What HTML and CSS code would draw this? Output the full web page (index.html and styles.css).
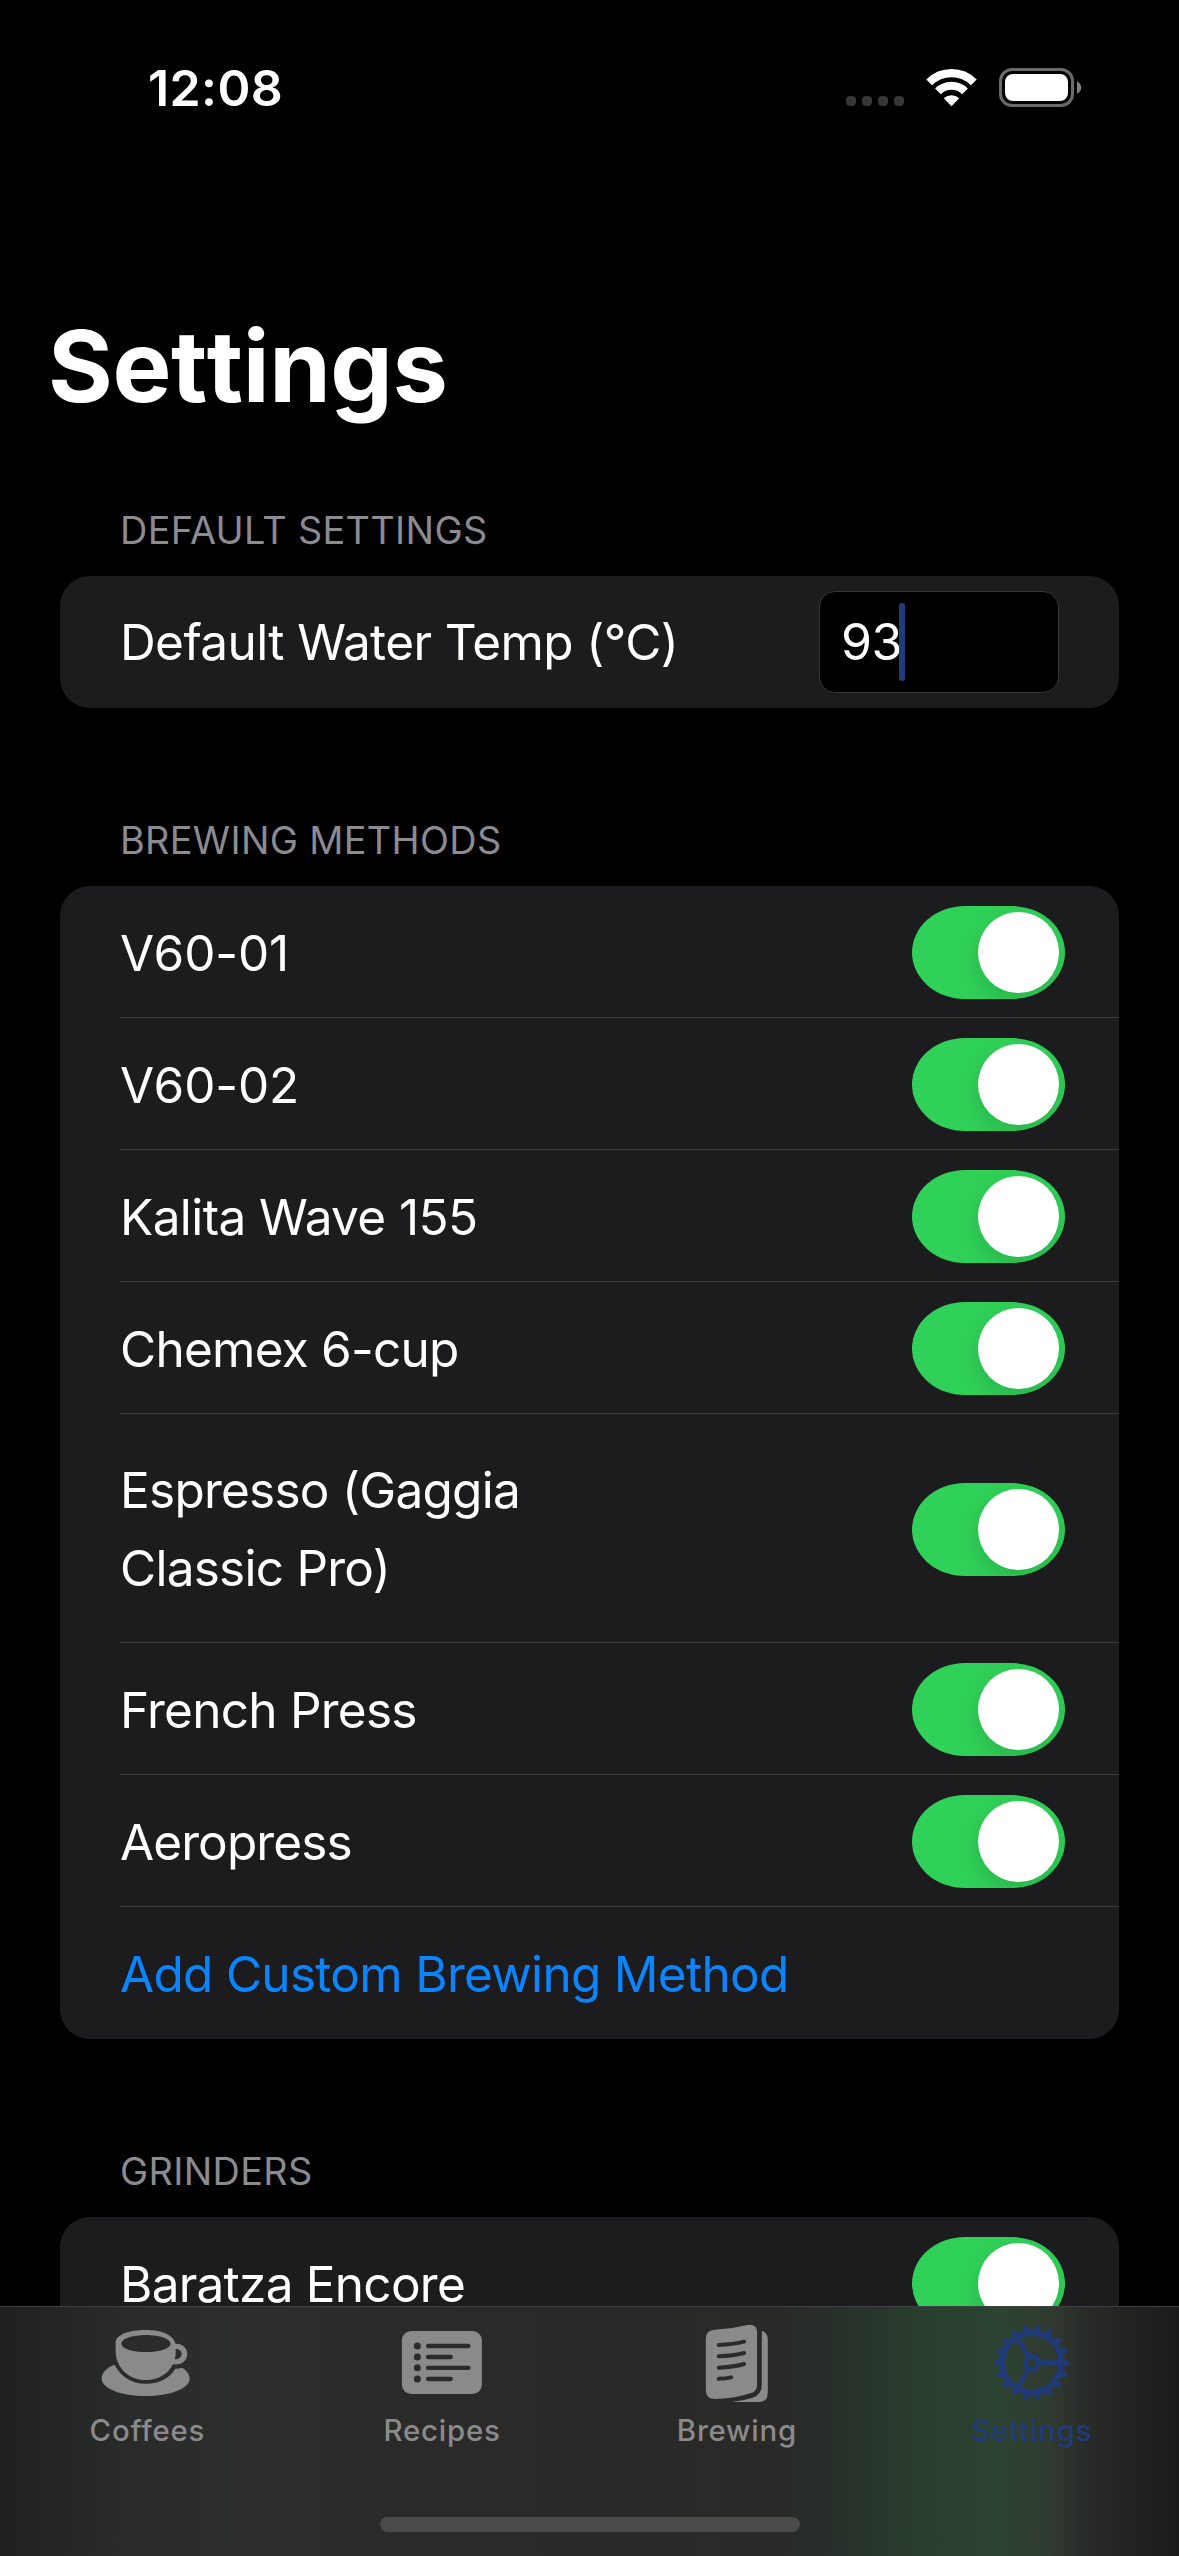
FILE: index.html
```html
<!DOCTYPE html>
<html lang="en">
<head>
<meta charset="utf-8">
<title>Settings</title>
<link rel="stylesheet" href="styles.css">
</head>
<body>
<div class="screen">
  <header class="status">
    <span class="clock">12:08</span>
    <div class="status-icons">
      <div class="signal"><i></i><i></i><i></i><i></i></div>
      <svg class="wifi" viewBox="0 0 51 38">
        <g fill="none" stroke="#fff" stroke-width="8.2">
          <path d="M3.2 13.4A31.6 31.6 0 0 1 47.8 13.4"/>
          <path d="M12 22.3A19.2 19.2 0 0 1 39 22.3"/>
        </g>
        <path fill="#fff" d="M25.5 37.3L17.8 29.3A11.3 11.3 0 0 1 33.2 29.3Z"/>
      </svg>
      <svg class="battery" viewBox="0 0 83 39">
        <rect x="1.5" y="1.5" width="72" height="36" rx="11.5" fill="none" stroke="#6a6a6a" stroke-width="3"/>
        <rect x="6" y="6" width="63" height="27" rx="8" fill="#fff"/>
        <path d="M78 13.2Q82.2 15.5 82.2 19.5T78 25.8Z" fill="#808080"/>
      </svg>
    </div>
  </header>

  <main class="content">
    <h1 class="title">Settings</h1>

    <section class="group">
      <h2 class="group-title">DEFAULT SETTINGS</h2>
      <div class="card">
        <div class="row field-row">
          <span class="label wide">Default Water Temp (°C)</span>
          <div class="field"><span class="value">93</span><b class="caret"></b></div>
        </div>
      </div>
    </section>

    <section class="group">
      <h2 class="group-title">BREWING METHODS</h2>
      <div class="card">
        <div class="row"><span class="label model">V60-01</span><span class="toggle"></span></div>
        <div class="row"><span class="label model">V60-02</span><span class="toggle"></span></div>
        <div class="row"><span class="label wide">Kalita Wave 155</span><span class="toggle"></span></div>
        <div class="row"><span class="label">Chemex 6-cup</span><span class="toggle"></span></div>
        <div class="row tall"><span class="label">Espresso (Gaggia<br>Classic Pro)</span><span class="toggle"></span></div>
        <div class="row"><span class="label">French Press</span><span class="toggle"></span></div>
        <div class="row"><span class="label tight">Aeropress</span><span class="toggle"></span></div>
        <div class="row"><span class="label link">Add Custom Brewing Method</span></div>
      </div>
    </section>

    <section class="group">
      <h2 class="group-title">GRINDERS</h2>
      <div class="card">
        <div class="row"><span class="label">Baratza Encore</span><span class="toggle"></span></div>
      </div>
    </section>
  </main>

  <nav class="tabs">
    <div class="tab">
      <svg class="icon" viewBox="-7.9 0 360 300">
        <path fill="currentColor" d="M75 164C92 198 124 221 169 221C209 221 241 203 257 176Q266 177 278 173C292 182 300 193 300 206C300 235 241 258 168 258C95 258 36 235 36 206C36 188 50 173 75 164Z"/>
        <path fill="currentColor" fill-rule="evenodd" d="M78 98C78 74 118 60 169 60C214 60 250 73 258 101C278 100 293 113 293 132C293 151 277 166 250 163C236 191 209 210 169 210C114 210 78 170 78 122ZM95 101C95 115 128 126 169 126S243 115 243 101S210 75 169 75S95 87 95 101ZM258 117C259 129 258 140 255 148C268 148 276 141 276 132C276 123 269 117 258 117Z"/>
      </svg>
      <span class="tab-label">Coffees</span>
    </div>
    <div class="tab">
      <svg class="icon" viewBox="-23.6 0 360 300">
        <rect x="36" y="63" width="240" height="189" rx="28" fill="currentColor"/>
        <g fill="#2a2b2a">
          <circle cx="82.500" cy="108" r="10.500"/><circle cx="82.500" cy="141" r="10.500"/>
          <circle cx="82.500" cy="173" r="10.500"/><circle cx="82.500" cy="207" r="10.500"/>
          <rect x="108" y="101.500" width="134" height="13" rx="6.500"/>
          <rect x="108" y="134.500" width="81" height="13" rx="6.500"/>
          <rect x="108" y="167" width="134" height="13" rx="6.500"/>
          <rect x="108" y="200.500" width="81" height="13" rx="6.500"/>
        </g>
      </svg>
      <span class="tab-label">Recipes</span>
    </div>
    <div class="tab">
      <svg class="icon" viewBox="-9.4 0 360 300">
        <path fill="currentColor" d="M77 86Q77 60 104 59Q154 57 203 45Q231 41 231 68V224Q231 244 211 250Q158 267 104 267Q77 267 77 240Z"/>
        <path fill="currentColor" d="M245 62Q263 68 263 90V248Q263 276 235 276H155Q189 272 218 263Q245 253 245 226Z"/>
        <g fill="none" stroke="#2a2b2a" stroke-width="12" stroke-linecap="round">
          <path d="M116 105Q160 103 192 95"/>
          <path d="M116 139Q160 137 192 129"/>
          <path d="M116 173Q160 171 192 162"/>
          <path d="M116 206.500Q138 206 153 202"/>
        </g>
      </svg>
      <span class="tab-label">Brewing</span>
    </div>
    <div class="tab active">
      <svg class="icon" viewBox="4.900 0 360 300">
        <g transform="translate(184.500 158)" fill="none" stroke="currentColor">
          <circle r="88.500" stroke-width="17"/>
          <circle r="19.500" stroke-width="15"/>
          <path stroke-width="14" d="M25 0H84M-12.500 -21.700L-42 -72.700M-12.500 21.700L-42 72.700"/>
          <g stroke="none" fill="currentColor">
            <path id="tooth" d="M92 -13Q97 -9 108 -6Q113 -5 113 0T108 6Q97 9 92 13Z"/>
            <use href="#tooth" transform="rotate(20)"/>
            <use href="#tooth" transform="rotate(40)"/>
            <use href="#tooth" transform="rotate(60)"/>
            <use href="#tooth" transform="rotate(80)"/>
            <use href="#tooth" transform="rotate(100)"/>
            <use href="#tooth" transform="rotate(120)"/>
            <use href="#tooth" transform="rotate(140)"/>
            <use href="#tooth" transform="rotate(160)"/>
            <use href="#tooth" transform="rotate(180)"/>
            <use href="#tooth" transform="rotate(200)"/>
            <use href="#tooth" transform="rotate(220)"/>
            <use href="#tooth" transform="rotate(240)"/>
            <use href="#tooth" transform="rotate(260)"/>
            <use href="#tooth" transform="rotate(280)"/>
            <use href="#tooth" transform="rotate(300)"/>
            <use href="#tooth" transform="rotate(320)"/>
            <use href="#tooth" transform="rotate(340)"/>
          </g>
        </g>
      </svg>
      <span class="tab-label">Settings</span>
    </div>
    <div class="home"></div>
  </nav>
</div>
</body>
</html>
```
FILE: styles.css
```css
* { box-sizing: border-box; }

body {
  margin: 0;
  background: #000;
  color: #fff;
  font-family: Inter, "Liberation Sans", sans-serif;
}

.screen {
  position: relative;
  width: 1179px;
  height: 2556px;
  overflow: hidden;
}

.status {
  display: flex;
  justify-content: space-between;
  height: 177px;
  padding: 57px 97px 0 148px;
}
.clock {
  font-size: 50px;
  font-weight: 600;
  line-height: 62px;
  letter-spacing: 0.4px;
}
.status-icons { display: flex; align-items: flex-start; }
.signal { display: flex; gap: 6px; margin: 39px 22px 0 0; }
.signal i { width: 10px; height: 10px; border-radius: 4px; background: #363636; }
.wifi { width: 51px; height: 38px; margin: 12px 22px 0 0; }
.battery { width: 83px; height: 39px; margin-top: 11px; }

.content { padding: 0 60px; }
.title {
  margin: 127px 0 0 -12px;
  font-size: 99px;
  font-weight: 700;
  font-kerning: none;
  line-height: 124px;
  letter-spacing: -0.4px;
}

.group { margin-bottom: 108px; }
.group-title {
  margin: 0;
  height: 70px;
  padding-left: 60px;
  font-size: 37.8px;
  font-weight: 400;
  line-height: 48px;
  letter-spacing: 0.35px;
  color: #8b8b91;
}
.title + .group { padding-top: 78px; }

.card {
  padding-left: 60px;
  border-radius: 30px;
  background: #1c1c1e;
}
.row {
  display: flex;
  align-items: center;
  justify-content: space-between;
  height: 132px;
  padding: 2px 54px 0 0;
  border-bottom: 1px solid #3a3a3c;
}
.row:last-child { border-bottom-color: transparent; }
.row.tall { height: 229px; }
.row.field-row { padding: 0 60px 0 0; }
.label {
  font-size: 49.5px;
  line-height: 78px;
  letter-spacing: -0.75px;
}
.label.wide { letter-spacing: -0.6px; }
.label.model { letter-spacing: -0.1px; }
.label.tight { letter-spacing: -0.9px; }
.label.link { color: #0a84ff; letter-spacing: -0.7px; }

.toggle {
  width: 153px;
  height: 93px;
  padding: 6px;
  border-radius: 53px / 46.5px;
  background: #30d158;
  overflow: hidden;
}
.toggle::before {
  content: "";
  display: block;
  width: 81px;
  height: 81px;
  margin-left: auto;
  border-radius: 50%;
  background: #fff;
  box-shadow: 0 9px 24px rgba(0, 0, 0, 0.15);
}

.field {
  display: flex;
  align-items: center;
  width: 240px;
  height: 102px;
  padding-left: 21px;
  border: 1px solid #353537;
  border-radius: 16px;
  background: #000;
  font-size: 50px;
}
.value {
  width: 57.5px;
  letter-spacing: -0.5px;
}
.caret {
  width: 6px;
  height: 78px;
  border-radius: 3px;
  background: #213c7c;
}

.tabs {
  position: absolute;
  left: 0;
  right: 0;
  bottom: 0;
  display: grid;
  grid-template-columns: repeat(4, 1fr);
  grid-template-rows: 210px 15px;
  height: 250px;
  border-top: 1px solid #404042;
  background: linear-gradient(90deg, #202020 0, #242525 60px, #2a2b2b 130px, #2e2e2e 270px, #2a2a2a 400px, #292929 640px, #292a28 780px, #28322b 850px, #293f2d 930px, #2d4331 1000px, #2f3a30 1050px, #292c29 1085px, #222422 1125px, #1b1b1b 1179px);
}
.tab {
  display: flex;
  flex-direction: column;
  align-items: center;
  padding-top: 3px;
  color: #8a8a8a;
}
.tab.active { color: #213b79; }
.icon { width: 120px; height: 100px; }
.tab-label {
  margin-top: 3px;
  font-size: 29.4px;
  font-weight: 500;
  line-height: 36px;
  letter-spacing: 0.8px;
}
.home {
  grid-column: 1 / -1;
  justify-self: center;
  width: 420px;
  height: 15px;
  border-radius: 8px;
  background: #4a4a4a;
}
```
